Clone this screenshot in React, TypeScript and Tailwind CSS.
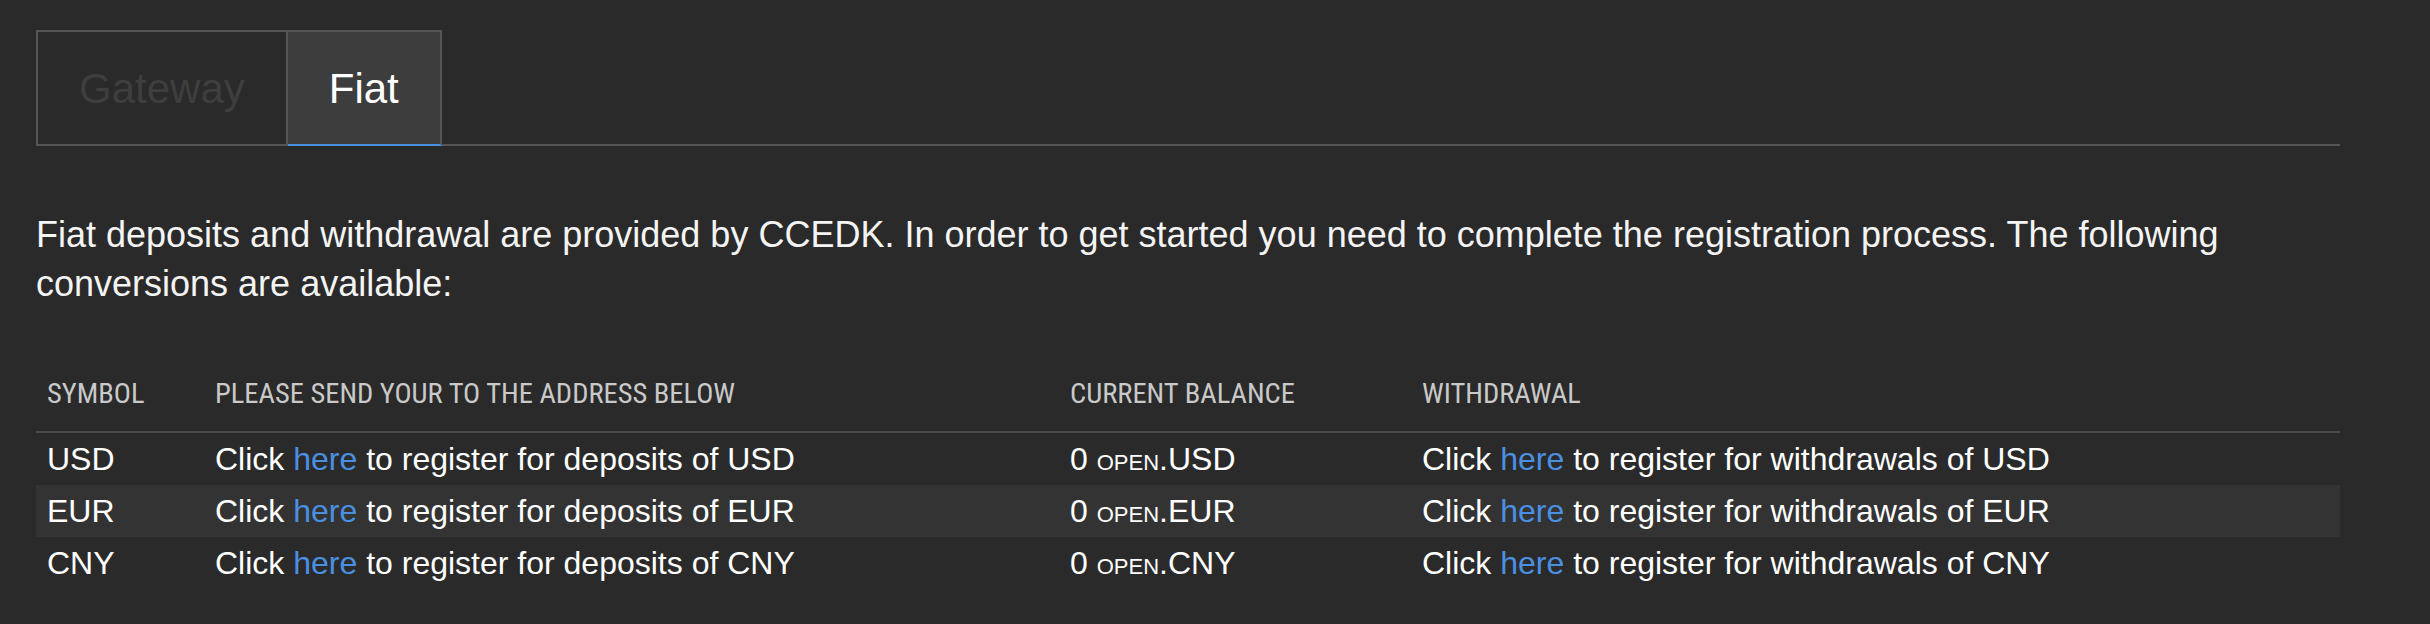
import clsx from 'clsx'

type Row = { symbol: string }

const ROWS: Row[] = [{ symbol: 'USD' }, { symbol: 'EUR' }, { symbol: 'CNY' }]

const COLS = 'grid grid-cols-[168px_855px_352px_1fr]'

export default function App() {
  return (
    <div className="min-h-[624px] w-full bg-[#2a2a2a] font-['Liberation_Sans',Arial,sans-serif] text-white">
      <div className="w-[2340px] pl-[36px] pt-[30px]">
        <Tabs />

        <p className="mt-[64px] max-w-[2250px] text-[36px] leading-[49px] text-[#f4f4f4]">
          Fiat deposits and withdrawal are provided by CCEDK. In order to get started you need to complete the
          registration process. The following conversions are available:
        </p>

        <div className="mt-[69px]">
          <div
            className={clsx(
              COLS,
              "border-b-2 border-[#4a4a4a] pb-[20px] font-['Liberation_Sans_Narrow','Roboto_Condensed',Roboto,sans-serif] text-[28.5px] leading-[34px] text-[#c9c9c9]"
            )}
          >
            <div className="px-[11px]">SYMBOL</div>
            <div className="px-[11px]">PLEASE SEND YOUR TO THE ADDRESS BELOW</div>
            <div className="px-[11px]">CURRENT BALANCE</div>
            <div className="px-[11px]">WITHDRAWAL</div>
          </div>

          {ROWS.map((r, i) => (
            <div
              key={r.symbol}
              className={clsx(COLS, 'h-[52px] items-center text-[32px] leading-[52px]', i === 1 && 'bg-[#333333]')}
            >
              <div className="px-[11px]">{r.symbol}</div>
              <div className="px-[11px] whitespace-nowrap">
                Click <a className="text-[#4a90e2]">here</a> to register for deposits of {r.symbol}
              </div>
              <div className="px-[11px] whitespace-nowrap">
                0 <span className="[font-variant:small-caps]">open</span>.{r.symbol}
              </div>
              <div className="px-[11px] whitespace-nowrap">
                Click <a className="text-[#4a90e2]">here</a> to register for withdrawals of {r.symbol}
              </div>
            </div>
          ))}
        </div>
      </div>
    </div>
  )
}

function Tabs() {
  return (
    <div className="flex border-b-2 border-[#555555]">
      <div className="flex h-[114px] items-center border-x-2 border-t-2 border-[#555555] px-[41px] text-[42px] text-[#3e3e3e]">
        Gateway
      </div>
      <div className="-mb-[2px] flex h-[116px] items-center border-t-2 border-r-2 border-b-2 border-[#555555] border-b-[#4a90e2] bg-[#3d3d3d] px-[41px] text-[42px] text-white">
        Fiat
      </div>
    </div>
  )
}
